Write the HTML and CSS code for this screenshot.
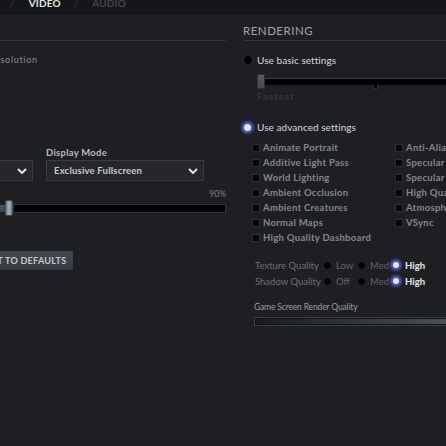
FILE: index.html
```html
<!DOCTYPE html>
<html lang="en">
<head>
<meta charset="utf-8">
<title>Video Settings</title>
<link rel="stylesheet" href="styles.css">
</head>
<body>
<div class="topbar">
  <div class="tabs">
    <span class="tab-sep">/</span>
    <span class="tab tab-active">VIDEO</span>
    <span class="tab-sep">/</span>
    <span class="tab">AUDIO</span>
  </div>
</div>
<div class="main">
  <section class="panel panel-left">
    <div class="panel-head"></div>
    <div class="res-label">Resolution</div>
    <div class="dropdown-row">
      <div class="field field-small">
        <div class="dropdown">
          <span class="dropdown-text"></span>
          <svg class="chevron" viewBox="0 0 10 6" width="10" height="6"><path d="M1 1 L5 5 L9 1" fill="none" stroke="#e8e8ea" stroke-width="1.9"/></svg>
        </div>
      </div>
      <div class="field field-wide">
        <div class="field-label">Display Mode</div>
        <div class="dropdown">
          <span class="dropdown-text">Exclusive Fullscreen</span>
          <svg class="chevron" viewBox="0 0 10 6" width="10" height="6"><path d="M1 1 L5 5 L9 1" fill="none" stroke="#e8e8ea" stroke-width="1.9"/></svg>
        </div>
      </div>
    </div>
    <div class="pct">90%</div>
    <div class="hslider">
      <div class="hslider-fill"></div>
      <div class="hslider-thumb"></div>
      <div class="hslider-track"></div>
    </div>
    <button class="reset-btn">RESET TO DEFAULTS</button>
  </section>

  <section class="panel panel-right">
    <div class="panel-head"><h2 class="panel-title">RENDERING</h2></div>
    <div class="radio-row">
      <span class="radio"></span>
      <span class="radio-label">Use basic settings</span>
    </div>
    <div class="basic-slider">
      <div class="basic-thumb"></div>
      <div class="basic-track"><span class="basic-tick"></span></div>
    </div>
    <div class="fastest">Fastest</div>
    <div class="radio-row radio-row-adv">
      <span class="radio radio-on"></span>
      <span class="radio-label">Use advanced settings</span>
    </div>
    <div class="checks">
      <div class="check-col">
        <div class="check"><span class="box"></span><span class="check-label">Animate Portrait</span></div>
        <div class="check"><span class="box"></span><span class="check-label">Additive Light Pass</span></div>
        <div class="check"><span class="box"></span><span class="check-label">World Lighting</span></div>
        <div class="check"><span class="box"></span><span class="check-label">Ambient Occlusion</span></div>
        <div class="check"><span class="box"></span><span class="check-label">Ambient Creatures</span></div>
        <div class="check"><span class="box"></span><span class="check-label">Normal Maps</span></div>
        <div class="check"><span class="box"></span><span class="check-label">High Quality Dashboard</span></div>
      </div>
      <div class="check-col">
        <div class="check"><span class="box"></span><span class="check-label">Anti-Aliasing</span></div>
        <div class="check"><span class="box"></span><span class="check-label">Specular</span></div>
        <div class="check"><span class="box"></span><span class="check-label">Specular</span></div>
        <div class="check"><span class="box"></span><span class="check-label">High Quality Water</span></div>
        <div class="check"><span class="box"></span><span class="check-label">Atmospheric Fog</span></div>
        <div class="check"><span class="box"></span><span class="check-label">VSync</span></div>
      </div>
    </div>
    <div class="quality">
      <span class="q-label">Texture Quality</span>
      <span class="q-opt"><span class="q-radio"></span><span class="q-text">Low</span></span>
      <span class="q-opt"><span class="q-radio"></span><span class="q-text">Med</span></span>
      <span class="q-opt"><span class="q-radio q-radio-on"></span><span class="q-text q-text-on">High</span></span>
      <span class="q-label">Shadow Quality</span>
      <span class="q-opt"><span class="q-radio"></span><span class="q-text">Off</span></span>
      <span class="q-opt"><span class="q-radio"></span><span class="q-text">Med</span></span>
      <span class="q-opt"><span class="q-radio q-radio-on"></span><span class="q-text q-text-on">High</span></span>
    </div>
    <div class="gsrq-label">Game Screen Render Quality</div>
    <div class="gsrq-bar"><div class="gsrq-fill"></div></div>
  </section>
</div>
</body>
</html>
```

FILE: styles.css
```css
* { box-sizing: border-box; }

html, body {
  margin: 0;
  padding: 0;
}

body {
  width: 446px;
  height: 446px;
  overflow: hidden;
  background: #1e1f23;
  font-family: Lato, "Noto Sans", sans-serif;
  color: #c8cacd;
}

/* top bar */
.topbar {
  height: 15px;
  background: #151619;
  overflow: hidden;
}
.tabs {
  display: flex;
  align-items: center;
  margin-top: -5px;
  height: 15px;
  padding-left: 10px;
  font-size: 10px;
  font-weight: 700;
  letter-spacing: 0.15px;
}
.tab-sep {
  color: #3c3e42;
  font-weight: 400;
  margin-right: 14px;
}
.tab {
  color: #45474b;
  margin-right: 13px;
}
.tab-active {
  color: #e4e5e7;
}

/* main */
.main {
  display: flex;
  gap: 17px;
}
.panel {
  display: flex;
  flex-direction: column;
  align-items: flex-start;
  flex: none;
}
.panel-left {
  width: 253px;
  margin-left: -27px;
}
.panel-right {
  width: 300px;
}
.panel-head {
  align-self: stretch;
  height: 26px;
  padding-top: 8px;
  border-bottom: 1px solid #35373b;
}
.panel-title {
  margin: 0;
  font-size: 11.5px;
  line-height: 15px;
  font-weight: 400;
  letter-spacing: 0.5px;
  color: #a3a5a9;
}

/* left panel */
.res-label {
  margin-top: 12px;
  margin-left: 16px;
  font-size: 9px;
  line-height: 14px;
  letter-spacing: 0.7px;
  color: #8c8e92;
}
.dropdown-row {
  margin-top: 80px;
  display: flex;
  align-items: flex-end;
  gap: 13px;
}
.field {
  display: flex;
  flex-direction: column;
  gap: 1px;
}
.field-small { width: 60px; }
.field-wide { width: 158px; }
.field-label {
  font-size: 9.5px;
  line-height: 12px;
  font-weight: 700;
  letter-spacing: 0.25px;
  color: #b9bbbe;
}
.dropdown {
  height: 21px;
  display: flex;
  align-items: center;
  justify-content: space-between;
  padding: 0 5px 0 7px;
  background: #25272b;
  border: 1px solid #3a3c40;
}
.dropdown-text {
  font-size: 9.5px;
  font-weight: 700;
  letter-spacing: 0.2px;
  color: #c9cbce;
}
.chevron { display: block; }

.pct {
  margin-top: 7px;
  align-self: stretch;
  text-align: right;
  font-size: 8.5px;
  line-height: 12px;
  color: #7d7f83;
}
.hslider {
  position: relative;
  align-self: stretch;
  height: 16px;
  display: flex;
  align-items: center;
}
.hslider-track {
  flex: 1;
  height: 9px;
  background: #020203;
  border: 1px solid #303236;
}
.hslider-fill {
  width: 32px;
  height: 7px;
  background: linear-gradient(#4f5a64, #39434c);
}
.hslider-thumb {
  width: 8px;
  height: 16px;
  border-radius: 2px;
  background: linear-gradient(90deg, #6f7e8b, #a3b2bd 50%, #6c7a86);
  border: 1px solid #3f4850;
}
.reset-btn {
  margin-top: 35px;
  margin-left: -4px;
  height: 19px;
  padding: 0 7px 0 6px;
  border: none;
  background: linear-gradient(#41464d, #363a40);
  font-family: Lato, "Noto Sans", sans-serif;
  font-size: 9px;
  font-weight: 700;
  letter-spacing: 0.3px;
  color: #c7cbcf;
}

/* right panel */
.radio-row {
  display: flex;
  align-items: center;
  gap: 4px;
  height: 14px;
  margin-top: 12px;
}
.radio-row-adv {
  margin-top: 18px;
  margin-left: -1px;
}
.radio {
  width: 10px;
  height: 10px;
  border-radius: 50%;
  background: #030304;
  border: 1px solid #2a2c30;
}
.radio-on {
  width: 11px;
  height: 11px;
  background: #e6e7f4;
  border: 2px solid #4e51a6;
  box-shadow: 0 0 3px 1px #4347a8;
}
.radio-label {
  font-size: 10px;
  letter-spacing: 0.05px;
  color: #d6d8db;
  font-weight: 400;
}
.basic-slider {
  position: relative;
  margin-top: 7px;
  margin-left: 14px;
  width: 300px;
  height: 15px;
  display: flex;
  align-items: center;
}
.basic-thumb {
  width: 8px;
  height: 15px;
  background: linear-gradient(#5a5c60, #46484c);
  border: 1px solid #2f3134;
}
.basic-track {
  position: relative;
  flex: 1;
  height: 7px;
  background: #000;
  border-top: 1px solid #3e4044;
}
.basic-tick {
  position: absolute;
  left: 108px;
  top: 5px;
  width: 5px;
  height: 5px;
  background: #000;
  border: 1px solid #2e3034;
  border-top: none;
}
.fastest {
  margin-top: 1px;
  margin-left: 14px;
  font-size: 10px;
  line-height: 12px;
  letter-spacing: 0.9px;
  color: #34363a;
  font-weight: 700;
}
.checks {
  margin-top: 6px;
  margin-left: 9px;
  display: flex;
}
.check-col {
  width: 143px;
  display: flex;
  flex-direction: column;
}
.check {
  height: 15px;
  display: flex;
  align-items: center;
  gap: 3px;
  white-space: nowrap;
}
.box {
  flex: none;
  width: 8px;
  height: 8px;
  background: #060607;
  border: 1px solid #2c2e32;
}
.check-label {
  font-size: 9.5px;
  letter-spacing: 0.3px;
  color: #85878b;
  font-weight: 700;
}

.quality {
  margin-top: 12px;
  margin-left: 12px;
  display: grid;
  grid-template-columns: 68px 34px 35px auto;
  grid-auto-rows: 16px;
  align-items: center;
}
.q-label {
  font-size: 9.5px;
  color: #6f7175;
  white-space: nowrap;
}
.q-opt {
  display: flex;
  align-items: center;
  gap: 4px;
}
.q-radio {
  width: 9px;
  height: 9px;
  border-radius: 50%;
  background: #030304;
  border: 1px solid #25272a;
}
.q-radio-on {
  width: 10px;
  height: 10px;
  margin-left: -1px;
  background: #e3e4f2;
  border: 2px solid #4e51a6;
  box-shadow: 0 0 3px 1px #4347a8;
}
.q-text {
  font-size: 9.5px;
  color: #636569;
}
.q-text-on {
  color: #e9e9ee;
  font-weight: 700;
}
.gsrq-label {
  margin-top: 12px;
  margin-left: 11px;
  font-size: 8.5px;
  line-height: 12px;
  letter-spacing: -0.15px;
  color: #9a9ca0;
}
.gsrq-bar {
  margin-top: 4px;
  margin-left: 11px;
  width: 250px;
  height: 9px;
  border: 1px solid #3c3f42;
  background: #111314;
  padding: 1px;
}
.gsrq-fill {
  height: 100%;
  background: linear-gradient(90deg, #191b1d, #3d4446 60%, #5a6366);
}
```
